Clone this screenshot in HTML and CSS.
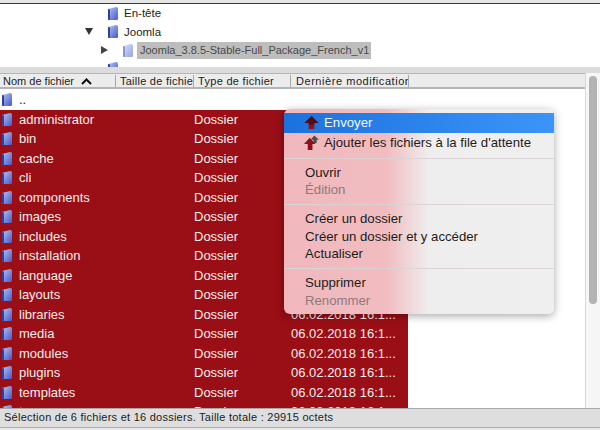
FILE: index.html
```html
<!DOCTYPE html>
<html lang="fr">
<head>
<meta charset="utf-8">
<title>FileZilla</title>
<link rel="stylesheet" href="styles.css">
</head>
<body>
<svg width="0" height="0" class="defs">
  <defs>
    <linearGradient id="fg" x1="0" y1="0" x2="1" y2="1">
      <stop offset="0" stop-color="#b9c8ee"/>
      <stop offset="0.5" stop-color="#7d90e0"/>
      <stop offset="1" stop-color="#4558c8"/>
    </linearGradient>
    <symbol id="folder" viewBox="0 0 12 15">
      <path d="M1 3 L9 1 Q11 .8 11 3 V13 Q11 14 9.500 14 H2 Q1 14 1 13 Z" fill="url(#fg)"/>
      <path d="M1 3 L3 3.500 V14 H2 Q1 14 1 13 Z" fill="#2f3f9c"/>
    </symbol>
    <symbol id="up" viewBox="0 0 16 16">
      <path d="M8 1 L15.500 8.500 H11 V15 H5 V8.500 H.5 Z" fill="#8f1218"/>
      <path d="M8 1 L15.500 8.500 H11 V10 H5 V8.500 H.5 Z" fill="#560b0f"/>
    </symbol>
    <symbol id="queue" viewBox="0 0 16 16">
      <path d="M6 3 L12.500 9.500 H9 V16 H4 V9.500 H0 Z" fill="#8f1218"/>
      <path d="M11 .5 L16 5 H13.500 V8.500 H10 V5 H7 Z" fill="#4d4d4d"/>
    </symbol>
  </defs>
</svg>
<div class="app">
  <div class="main">
    <section class="tree">
      <div class="tree-row indent-1"><span class="arrow"></span><svg class="ficon"><use href="#folder"/></svg><span>En-tête</span></div>
      <div class="tree-row indent-1"><span class="arrow down"></span><svg class="ficon"><use href="#folder"/></svg><span>Joomla</span></div>
      <div class="tree-row indent-2"><span class="arrow right"></span><svg class="ficon pale"><use href="#folder"/></svg><span class="tree-sel">Joomla_3.8.5-Stable-Full_Package_French_v1</span></div>
      <div class="tree-row indent-1"><span class="arrow"></span><svg class="ficon"><use href="#folder"/></svg><span>.</span></div>
    </section>
    <div class="splitter"></div>
    <header class="cols">
      <div class="col c-name">Nom de fichier <svg class="sort" width="11" height="7" viewBox="0 0 11 7"><path d="M1 6 L5.500 1.500 L10 6" fill="none" stroke="#111" stroke-width="2"/></svg></div>
      <div class="col c-size">Taille de fichie</div>
      <div class="col c-type">Type de fichier</div>
      <div class="col c-date">Dernière modification</div>
      <div class="col c-rest"></div>
    </header>
    <div class="list">
      <div class="row parent"><svg class="ficon"><use href="#folder"/></svg><span class="name">..</span></div>
      <div class="row sel"><svg class="ficon"><use href="#folder"/></svg><span class="name">administrator</span><span class="type">Dossier</span><span class="date">06.02.2018 16:1...</span></div>
      <div class="row sel"><svg class="ficon"><use href="#folder"/></svg><span class="name">bin</span><span class="type">Dossier</span><span class="date">06.02.2018 16:1...</span></div>
      <div class="row sel"><svg class="ficon"><use href="#folder"/></svg><span class="name">cache</span><span class="type">Dossier</span><span class="date">06.02.2018 16:1...</span></div>
      <div class="row sel"><svg class="ficon"><use href="#folder"/></svg><span class="name">cli</span><span class="type">Dossier</span><span class="date">06.02.2018 16:1...</span></div>
      <div class="row sel"><svg class="ficon"><use href="#folder"/></svg><span class="name">components</span><span class="type">Dossier</span><span class="date">06.02.2018 16:1...</span></div>
      <div class="row sel"><svg class="ficon"><use href="#folder"/></svg><span class="name">images</span><span class="type">Dossier</span><span class="date">06.02.2018 16:1...</span></div>
      <div class="row sel"><svg class="ficon"><use href="#folder"/></svg><span class="name">includes</span><span class="type">Dossier</span><span class="date">06.02.2018 16:1...</span></div>
      <div class="row sel"><svg class="ficon"><use href="#folder"/></svg><span class="name">installation</span><span class="type">Dossier</span><span class="date">06.02.2018 16:1...</span></div>
      <div class="row sel"><svg class="ficon"><use href="#folder"/></svg><span class="name">language</span><span class="type">Dossier</span><span class="date">06.02.2018 16:1...</span></div>
      <div class="row sel"><svg class="ficon"><use href="#folder"/></svg><span class="name">layouts</span><span class="type">Dossier</span><span class="date">06.02.2018 16:1...</span></div>
      <div class="row sel"><svg class="ficon"><use href="#folder"/></svg><span class="name">libraries</span><span class="type">Dossier</span><span class="date">06.02.2018 16:1...</span></div>
      <div class="row sel"><svg class="ficon"><use href="#folder"/></svg><span class="name">media</span><span class="type">Dossier</span><span class="date">06.02.2018 16:1...</span></div>
      <div class="row sel"><svg class="ficon"><use href="#folder"/></svg><span class="name">modules</span><span class="type">Dossier</span><span class="date">06.02.2018 16:1...</span></div>
      <div class="row sel"><svg class="ficon"><use href="#folder"/></svg><span class="name">plugins</span><span class="type">Dossier</span><span class="date">06.02.2018 16:1...</span></div>
      <div class="row sel"><svg class="ficon"><use href="#folder"/></svg><span class="name">templates</span><span class="type">Dossier</span><span class="date">06.02.2018 16:1...</span></div>
      <div class="row sel last"><svg class="ficon"><use href="#folder"/></svg><span class="name">tmp</span><span class="type">Dossier</span><span class="date">06.02.2018 16:1...</span></div>
      <div class="scrollbar"><div class="thumb"></div></div>
    </div>
    <footer class="status">Sélection de 6 fichiers et 16 dossiers. Taille totale : 29915 octets</footer>
  </div>
  <nav class="menu">
    <div class="mi active"><svg class="micon"><use href="#up"/></svg>Envoyer</div>
    <div class="mi"><svg class="micon"><use href="#queue"/></svg>Ajouter les fichiers à la file d'attente</div>
    <div class="sep"></div>
    <div class="mi">Ouvrir</div>
    <div class="mi off">Édition</div>
    <div class="sep"></div>
    <div class="mi">Créer un dossier</div>
    <div class="mi">Créer un dossier et y accéder</div>
    <div class="mi">Actualiser</div>
    <div class="sep"></div>
    <div class="mi">Supprimer</div>
    <div class="mi off">Renommer</div>
  </nav>
</div>
</body>
</html>
```

FILE: styles.css
```css
* { box-sizing: border-box; }
html, body { margin: 0; padding: 0; }
body {
  width: 600px;
  height: 430px;
  overflow: hidden;
  background: #e6e6e6;
  font-family: "Liberation Sans", Arial, sans-serif;
  font-size: 13px;
  color: #1a1a1a;
}
.defs { position: absolute; }
.app { position: relative; width: 600px; height: 430px; }
.main { display: flex; flex-direction: column; height: 430px; }

.tree {
  height: 64px;
  flex: none;
  margin-top: 3px;
  border-top: 1px solid #3a3a3a;
  background: #fff;
  overflow: hidden;
}
.tree-row {
  display: flex;
  align-items: center;
  height: 18.500px;
  font-size: 11.500px;
  color: #222;
}
.indent-1 { padding-left: 84px; }
.indent-2 { padding-left: 100px; }
.arrow { width: 23px; height: 10px; flex: none; position: relative; }
.arrow.down::before {
  content: "";
  position: absolute; left: 1px; top: 1px;
  border-left: 4px solid transparent;
  border-right: 4px solid transparent;
  border-top: 7px solid #333;
}
.arrow.right { width: 22px; }
.arrow.right::before {
  content: "";
  position: absolute; left: 1px; top: 1px;
  border-top: 4px solid transparent;
  border-bottom: 4px solid transparent;
  border-left: 7px solid #444;
}
.ficon { width: 12px; height: 15px; flex: none; }
.ficon.pale { opacity: .55; }
.tree-row .ficon { margin-right: 5px; }
.tree-sel {
  background: #bdbdbd;
  color: #4a4a4a;
  font-size: 11px;
  padding: 2px 2px 3px 3px;
  margin-left: -2px;
  white-space: nowrap;
}

.splitter {
  height: 7px;
  flex: none;
  background: #dcdcdc;
  border-bottom: 1px solid #b5b5b5;
}

.cols {
  display: flex;
  flex: none;
  height: 15px;
  background: #ececec;
  border-bottom: 2px solid #b4b4b4;
  font-size: 11px;
  color: #222;
}
.col { padding-left: 3px; border-right: 1px solid #a8a8a8; height: 12px; line-height: 12px; white-space: nowrap; overflow: hidden; margin-top: 1px; }
.c-name { width: 116px; }
.c-size { width: 78px; letter-spacing: .25px; padding-left: 4px; }
.c-type { width: 97px; letter-spacing: .3px; padding-left: 4px; }
.c-date { width: 118px; letter-spacing: .55px; padding-left: 5px; }
.c-rest { flex: 1; border-right: none; }
.sort { margin-left: 4px; }

.list {
  position: relative;
  flex: none;
  height: 319px;
  background: #fff;
}
.row {
  display: flex;
  align-items: center;
  height: 19.500px;
  width: 408px;
  padding-left: 1px;
  white-space: nowrap;
}
.row.parent { height: 20.500px; }
.row.sel { background: #9a0e16; color: #f5eeee; }
.row.last { height: 12.500px; overflow: hidden; align-items: flex-start; padding-top: 2px; }
.row .ficon { margin-right: 6px; }
.name { width: 175px; }
.type { width: 97px; }
.scrollbar {
  position: absolute;
  top: -16px; right: 0; bottom: 0;
  width: 15px;
  background: #f6f6f6;
  border-left: 1px solid #d8d8d8;
}
.thumb {
  width: 8px;
  height: 228px;
  margin: 3px 0 0 3px;
  border-radius: 4px;
  background: #b3b3b3;
}

.status {
  flex: none;
  position: relative;
  height: 20px;
  background: #dedede;
  border-top: 1px solid #a8a8a8;
  border-bottom: 1px solid #b0b0b0;
  padding-left: 4px;
  font-size: 11px;
  line-height: 16px;
  letter-spacing: .25px;
  color: #222;
}

.menu {
  position: absolute;
  left: 284px;
  top: 109px;
  width: 270px;
  height: 205px;
  padding-top: 4px;
  border-radius: 6px;
  background: linear-gradient(90deg, #f0b8bc 0, #f1bcc0 38%, #efeeee 54%, #efefef 100%);
  box-shadow: 0 2px 8px rgba(0,0,0,.35);
  font-size: 13.200px;
  color: #1c1c1c;
}
.mi {
  display: flex;
  align-items: center;
  height: 17.500px;
  padding-left: 21px;
  white-space: nowrap;
  position: relative;
}
.mi:has(.micon) { padding-left: 40px; height: 19.500px; }
.mi.off { color: #8e7a7e; }
.mi.active {
  background: linear-gradient(90deg, #1c72dd, #3b95f8);
  color: #f4f8ff;
}
.micon { width: 15px; height: 15px; position: absolute; left: 20px; top: 2px; }
.sep { height: 1px; background: #dcd4d4; margin: 5.500px 0 5px; }
```
